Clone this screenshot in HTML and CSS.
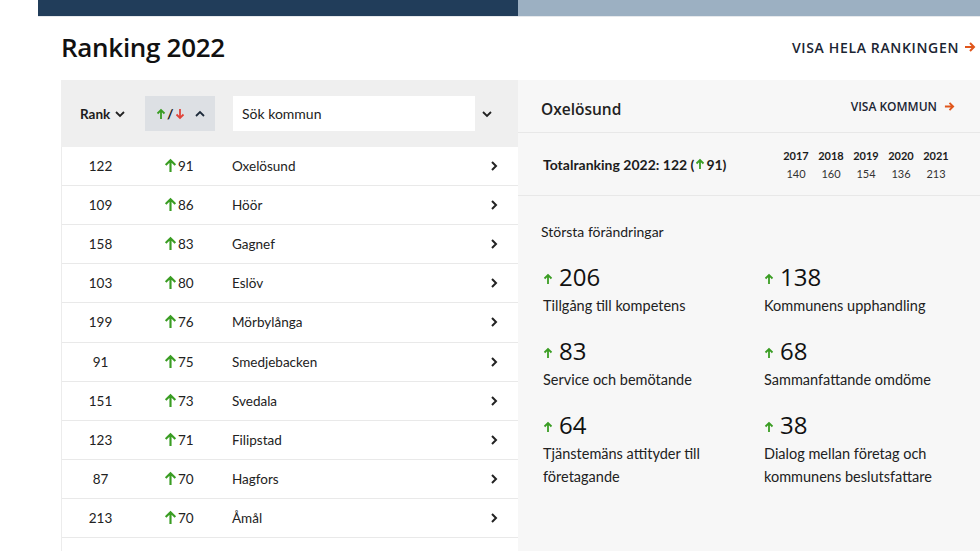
FILE: index.html
```html
<!DOCTYPE html>
<html lang="sv">
<head>
<meta charset="utf-8">
<title>Ranking 2022</title>
<link rel="stylesheet" href="styles.css">
</head>
<body>
<div class="topbar"><div class="tb-dark"></div><div class="tb-light"></div></div>
<div class="main">
  <div class="title-row">
    <h1 class="title">Ranking 2022</h1>
    <a class="link-all">VISA HELA RANKINGEN <svg class="arr-r" viewBox="0 0 12 12" width="12" height="12"><path d="M1 6h9M6 2l4 4-4 4" fill="none" stroke="#e0561b" stroke-width="2"/></svg></a>
  </div>
  <div class="content">
    <div class="left">
      <div class="lhead">
        <div class="rank-sort">Rank <svg viewBox="0 0 12 12" width="12" height="12"><path d="M2 4l4 4 4-4" fill="none" stroke="#222" stroke-width="1.8"/></svg></div>
        <div class="chg-sort">
          <svg viewBox="0 0 10 12" width="10" height="12"><path d="M5 11V2M1.5 5.5L5 2l3.5 3.5" fill="none" stroke="#3a9d23" stroke-width="1.8"/></svg>
          <span class="slash">/</span>
          <svg viewBox="0 0 10 12" width="10" height="12"><path d="M5 1v9M1.5 6.5L5 10l3.5-3.5" fill="none" stroke="#e0443a" stroke-width="1.8"/></svg>
          <svg class="up-chev" viewBox="0 0 12 12" width="12" height="12"><path d="M2 8l4-4 4 4" fill="none" stroke="#1d2a3a" stroke-width="1.8"/></svg>
        </div>
        <div class="search">Sök kommun</div>
        <svg class="search-chev" viewBox="0 0 12 12" width="12" height="12"><path d="M2 4l4 4 4-4" fill="none" stroke="#222" stroke-width="1.8"/></svg>
      </div>
      <div class="rows">
        <div class="row"><span class="c-rank">122</span><span class="c-chg"><svg viewBox="0 0 12 14" width="12" height="14"><path d="M6 13V2M1.5 6.5L6 2l4.5 4.5" fill="none" stroke="#3a9d23" stroke-width="2"/></svg>91</span><span class="c-name">Oxelösund</span><svg class="rchev" viewBox="0 0 10 12" width="10" height="12"><path d="M3 2l4 4-4 4" fill="none" stroke="#222" stroke-width="2"/></svg></div>
        <div class="row"><span class="c-rank">109</span><span class="c-chg"><svg viewBox="0 0 12 14" width="12" height="14"><path d="M6 13V2M1.5 6.5L6 2l4.5 4.5" fill="none" stroke="#3a9d23" stroke-width="2"/></svg>86</span><span class="c-name">Höör</span><svg class="rchev" viewBox="0 0 10 12" width="10" height="12"><path d="M3 2l4 4-4 4" fill="none" stroke="#222" stroke-width="2"/></svg></div>
        <div class="row"><span class="c-rank">158</span><span class="c-chg"><svg viewBox="0 0 12 14" width="12" height="14"><path d="M6 13V2M1.5 6.5L6 2l4.5 4.5" fill="none" stroke="#3a9d23" stroke-width="2"/></svg>83</span><span class="c-name">Gagnef</span><svg class="rchev" viewBox="0 0 10 12" width="10" height="12"><path d="M3 2l4 4-4 4" fill="none" stroke="#222" stroke-width="2"/></svg></div>
        <div class="row"><span class="c-rank">103</span><span class="c-chg"><svg viewBox="0 0 12 14" width="12" height="14"><path d="M6 13V2M1.5 6.5L6 2l4.5 4.5" fill="none" stroke="#3a9d23" stroke-width="2"/></svg>80</span><span class="c-name">Eslöv</span><svg class="rchev" viewBox="0 0 10 12" width="10" height="12"><path d="M3 2l4 4-4 4" fill="none" stroke="#222" stroke-width="2"/></svg></div>
        <div class="row"><span class="c-rank">199</span><span class="c-chg"><svg viewBox="0 0 12 14" width="12" height="14"><path d="M6 13V2M1.5 6.5L6 2l4.5 4.5" fill="none" stroke="#3a9d23" stroke-width="2"/></svg>76</span><span class="c-name">Mörbylånga</span><svg class="rchev" viewBox="0 0 10 12" width="10" height="12"><path d="M3 2l4 4-4 4" fill="none" stroke="#222" stroke-width="2"/></svg></div>
        <div class="row"><span class="c-rank">91</span><span class="c-chg"><svg viewBox="0 0 12 14" width="12" height="14"><path d="M6 13V2M1.5 6.5L6 2l4.5 4.5" fill="none" stroke="#3a9d23" stroke-width="2"/></svg>75</span><span class="c-name">Smedjebacken</span><svg class="rchev" viewBox="0 0 10 12" width="10" height="12"><path d="M3 2l4 4-4 4" fill="none" stroke="#222" stroke-width="2"/></svg></div>
        <div class="row"><span class="c-rank">151</span><span class="c-chg"><svg viewBox="0 0 12 14" width="12" height="14"><path d="M6 13V2M1.5 6.5L6 2l4.5 4.5" fill="none" stroke="#3a9d23" stroke-width="2"/></svg>73</span><span class="c-name">Svedala</span><svg class="rchev" viewBox="0 0 10 12" width="10" height="12"><path d="M3 2l4 4-4 4" fill="none" stroke="#222" stroke-width="2"/></svg></div>
        <div class="row"><span class="c-rank">123</span><span class="c-chg"><svg viewBox="0 0 12 14" width="12" height="14"><path d="M6 13V2M1.5 6.5L6 2l4.5 4.5" fill="none" stroke="#3a9d23" stroke-width="2"/></svg>71</span><span class="c-name">Filipstad</span><svg class="rchev" viewBox="0 0 10 12" width="10" height="12"><path d="M3 2l4 4-4 4" fill="none" stroke="#222" stroke-width="2"/></svg></div>
        <div class="row"><span class="c-rank">87</span><span class="c-chg"><svg viewBox="0 0 12 14" width="12" height="14"><path d="M6 13V2M1.5 6.5L6 2l4.5 4.5" fill="none" stroke="#3a9d23" stroke-width="2"/></svg>70</span><span class="c-name">Hagfors</span><svg class="rchev" viewBox="0 0 10 12" width="10" height="12"><path d="M3 2l4 4-4 4" fill="none" stroke="#222" stroke-width="2"/></svg></div>
        <div class="row"><span class="c-rank">213</span><span class="c-chg"><svg viewBox="0 0 12 14" width="12" height="14"><path d="M6 13V2M1.5 6.5L6 2l4.5 4.5" fill="none" stroke="#3a9d23" stroke-width="2"/></svg>70</span><span class="c-name">Åmål</span><svg class="rchev" viewBox="0 0 10 12" width="10" height="12"><path d="M3 2l4 4-4 4" fill="none" stroke="#222" stroke-width="2"/></svg></div>
        <div class="row"></div>
      </div>
    </div>
    <div class="right">
      <div class="rhead">
        <div class="kname">Oxelösund</div>
        <a class="link-k">VISA KOMMUN <svg viewBox="0 0 12 12" width="11" height="11"><path d="M1 6h9M6 2l4 4-4 4" fill="none" stroke="#e0561b" stroke-width="2"/></svg></a>
      </div>
      <div class="total">
        <div class="total-txt">Totalranking 2022: 122 (<svg viewBox="0 0 10 12" width="10" height="12"><path d="M5 11V2M1.5 5.5L5 2l3.5 3.5" fill="none" stroke="#3a9d23" stroke-width="1.8"/></svg>91)</div>
        <div class="years">
          <div class="yr"><b>2017</b><span>140</span></div>
          <div class="yr"><b>2018</b><span>160</span></div>
          <div class="yr"><b>2019</b><span>154</span></div>
          <div class="yr"><b>2020</b><span>136</span></div>
          <div class="yr"><b>2021</b><span>213</span></div>
        </div>
      </div>
      <div class="changes">
        <div class="ch-title">Största förändringar</div>
        <div class="grid">
          <div class="item"><div class="num"><svg viewBox="0 0 10 12" width="10" height="12"><path d="M5 11V2M1.5 5.5L5 2l3.5 3.5" fill="none" stroke="#3a9d23" stroke-width="1.8"/></svg>206</div><div class="lbl">Tillgång till kompetens</div></div>
          <div class="item"><div class="num"><svg viewBox="0 0 10 12" width="10" height="12"><path d="M5 11V2M1.5 5.5L5 2l3.5 3.5" fill="none" stroke="#3a9d23" stroke-width="1.8"/></svg>138</div><div class="lbl">Kommunens upphandling</div></div>
          <div class="item"><div class="num"><svg viewBox="0 0 10 12" width="10" height="12"><path d="M5 11V2M1.5 5.5L5 2l3.5 3.5" fill="none" stroke="#3a9d23" stroke-width="1.8"/></svg>83</div><div class="lbl">Service och bemötande</div></div>
          <div class="item"><div class="num"><svg viewBox="0 0 10 12" width="10" height="12"><path d="M5 11V2M1.5 5.5L5 2l3.5 3.5" fill="none" stroke="#3a9d23" stroke-width="1.8"/></svg>68</div><div class="lbl">Sammanfattande omdöme</div></div>
          <div class="item"><div class="num"><svg viewBox="0 0 10 12" width="10" height="12"><path d="M5 11V2M1.5 5.5L5 2l3.5 3.5" fill="none" stroke="#3a9d23" stroke-width="1.8"/></svg>64</div><div class="lbl">Tjänstemäns attityder till företagande</div></div>
          <div class="item"><div class="num"><svg viewBox="0 0 10 12" width="10" height="12"><path d="M5 11V2M1.5 5.5L5 2l3.5 3.5" fill="none" stroke="#3a9d23" stroke-width="1.8"/></svg>38</div><div class="lbl">Dialog mellan företag och kommunens beslutsfattare</div></div>
        </div>
      </div>
    </div>
  </div>
</div>
</body>
</html>
```
FILE: styles.css
```css
* { box-sizing: border-box; }
html, body { margin: 0; padding: 0; background: #fff; overflow: hidden; }
body { font-family: "Lato", "Open Sans", sans-serif; color: #1c1c1c; width: 980px; height: 551px; }
svg { display: inline-block; flex: none; }

.topbar { margin-left: 38px; height: 17px; display: flex; border-bottom: 1px solid #e6e9ec; }
.tb-dark { width: 480px; background: #213d5a; }
.tb-light { flex: 1; background: #9cb0c2; }

.main { margin-left: 61px; }
.title-row { height: 63px; display: flex; align-items: center; justify-content: space-between; padding: 0 4px 3px 0; }
.title { margin: 0; font-family: "Open Sans", sans-serif; font-weight: 600; font-size: 26px; letter-spacing: -0.3px; color: #111; }
.link-all { font-family: "Open Sans", sans-serif; font-weight: 600; font-size: 14px; letter-spacing: 0.65px; color: #1b2533; display: flex; align-items: center; gap: 5px; }

.content { display: flex; }
.left { width: 457px; flex: none; }
.lhead { height: 67px; background: #efefef; display: flex; align-items: center; padding-left: 19px; }
.rank-sort { display: flex; align-items: center; gap: 4px; font-size: 13.5px; font-weight: 700; color: #1c1c1c; width: 65px; }
.chg-sort { width: 70px; height: 35px; background: #dde0e4; display: flex; align-items: center; padding-left: 11px; }
.chg-sort .slash { font-size: 14px; font-weight: 700; margin: 0 1px; color: #1c1c1c; }
.chg-sort .up-chev { margin-left: 9px; }
.search { width: 242px; height: 35px; background: #fff; margin-left: 18px; display: flex; align-items: center; padding-left: 9px; font-size: 14px; color: #222; }
.search-chev { margin-left: 6px; }

.rows { border-left: 1px solid #ececec; }
.row { height: 39.12px; border-bottom: 1px solid #e9e9e9; display: flex; align-items: center; font-size: 13.5px; color: #222; }
.c-rank { width: 77px; text-align: center; }
.c-chg { width: 93px; display: flex; align-items: center; padding-left: 25px; gap: 1px; }
.c-chg svg { margin-top: -1px; width: 13px; height: 15px; }
.c-name { flex: 1; }
.rchev { margin-right: 19px; }

.right { flex: 1; background: #f7f7f7; min-height: 480px; }
.rhead { height: 53px; border-bottom: 1px solid #e8e8e8; display: flex; align-items: center; justify-content: space-between; padding: 6px 25px 0 23px; }
.kname { font-family: "Open Sans", sans-serif; font-size: 15.5px; font-weight: 600; color: #222; }
.link-k { font-family: "Open Sans", sans-serif; font-size: 12px; font-weight: 600; color: #1b2533; display: flex; align-items: center; gap: 7px; margin-top: -6px; }
.total { height: 63px; border-bottom: 1px solid #e8e8e8; display: flex; align-items: center; justify-content: space-between; padding: 0 29px 0 25px; }
.total-txt { font-size: 14px; font-weight: 700; color: #1c1c1c; display: flex; align-items: center; }
.total-txt svg { margin: 0 1px; }
.years { display: flex; gap: 5px; margin-top: 2px; }
.yr { width: 30px; display: flex; flex-direction: column; align-items: center; gap: 4px; font-size: 11px; line-height: 14px; }
.yr b { font-weight: 700; color: #1c1c1c; }
.yr span { color: #333; }

.changes { padding: 27px 20px 0 23px; }
.ch-title { font-size: 14px; color: #1c1c1c; margin-bottom: 21px; }
.grid { display: grid; grid-template-columns: 221px 1fr; row-gap: 6px; }
.num { font-family: "Open Sans", sans-serif; font-size: 24px; font-weight: 500; color: #111; display: flex; align-items: center; gap: 6px; height: 30px; }
.num svg { margin-top: 6px; margin-left: 2px; }
.lbl { font-size: 14.5px; line-height: 23px; color: #222; padding-left: 2px; min-height: 35px; margin-top: 3px; }
```
